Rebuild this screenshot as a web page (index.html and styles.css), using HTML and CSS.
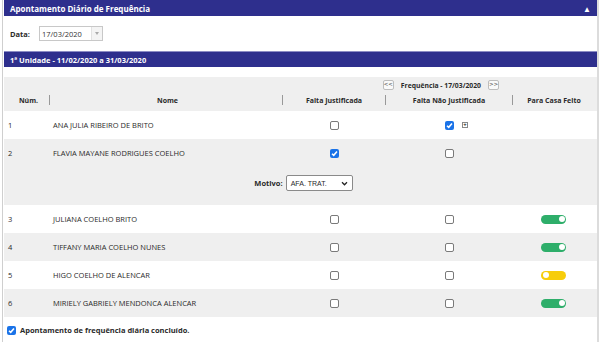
FILE: index.html
```html
<!DOCTYPE html>
<html lang="pt-BR">
<head>
    <meta charset="UTF-8">
    <title>Apontamento Diário de Frequência</title>
    <link rel="stylesheet" href="styles.css">
</head>
<body>

<div class="page">
    <div class="bar bar-top">
        <span>Apontamento Diário de Frequência</span>
        <span class="collapse">&#9650;</span>
    </div>

    <div class="date-row">
        <label class="date-label">Data:</label>
        <div class="date-input">
            <span class="date-value">17/03/2020</span>
            <span class="date-drop"><span class="tri"></span></span>
        </div>
    </div>

    <div class="bar bar-unit">1ª Unidade - 11/02/2020 a 31/03/2020</div>

    <div class="grid-head">
        <div class="nav-row">
            <span class="nav-btn">&lt;&lt;</span>
            <span class="nav-title">Frequência - 17/03/2020</span>
            <span class="nav-btn">&gt;&gt;</span>
        </div>
        <div class="row head-row">
            <div class="cell c-num sep">Núm.</div>
            <div class="cell c-name sep">Nome</div>
            <div class="cell c-mid sep">Falta Justificada</div>
            <div class="cell c-mid sep">Falta Não Justificada</div>
            <div class="cell c-mid">Para Casa Feito</div>
        </div>
    </div>

    <div class="row">
        <div class="cell c-num">1</div>
        <div class="cell c-name">ANA JULIA RIBEIRO DE BRITO</div>
        <div class="cell c-mid"><span class="chk"></span></div>
        <div class="cell c-mid c-plus">
            <span></span>
            <span class="chk on"><svg viewBox="0 0 8 8"><path d="M1.8 4.2 3.3 5.6 6.2 2.2" /></svg></span>
            <span class="plus">+</span>
        </div>
        <div class="cell c-mid"></div>
    </div>

    <div class="row-group alt">
        <div class="row">
            <div class="cell c-num">2</div>
            <div class="cell c-name">FLAVIA MAYANE RODRIGUES COELHO</div>
            <div class="cell c-mid"><span class="chk on"><svg viewBox="0 0 8 8"><path d="M1.8 4.2 3.3 5.6 6.2 2.2" /></svg></span></div>
            <div class="cell c-mid"><span class="chk"></span></div>
            <div class="cell c-mid"></div>
        </div>
        <div class="motivo">
            <label class="motivo-label">Motivo:</label>
            <div class="select">
                <span>AFA. TRAT.</span>
                <svg class="caret" viewBox="0 0 8 6"><path d="M1 1.5 4 4.5 7 1.5" /></svg>
            </div>
        </div>
    </div>

    <div class="row">
        <div class="cell c-num">3</div>
        <div class="cell c-name">JULIANA COELHO BRITO</div>
        <div class="cell c-mid"><span class="chk"></span></div>
        <div class="cell c-mid"><span class="chk"></span></div>
        <div class="cell c-mid"><span class="toggle on"></span></div>
    </div>

    <div class="row alt">
        <div class="cell c-num">4</div>
        <div class="cell c-name">TIFFANY MARIA COELHO NUNES</div>
        <div class="cell c-mid"><span class="chk"></span></div>
        <div class="cell c-mid"><span class="chk"></span></div>
        <div class="cell c-mid"><span class="toggle on"></span></div>
    </div>

    <div class="row">
        <div class="cell c-num">5</div>
        <div class="cell c-name">HIGO COELHO DE ALENCAR</div>
        <div class="cell c-mid"><span class="chk"></span></div>
        <div class="cell c-mid"><span class="chk"></span></div>
        <div class="cell c-mid"><span class="toggle off"></span></div>
    </div>

    <div class="row alt">
        <div class="cell c-num">6</div>
        <div class="cell c-name">MIRIELY GABRIELY MENDONCA ALENCAR</div>
        <div class="cell c-mid"><span class="chk"></span></div>
        <div class="cell c-mid"><span class="chk"></span></div>
        <div class="cell c-mid"><span class="toggle on"></span></div>
    </div>

    <div class="done">
        <span class="chk on"><svg viewBox="0 0 8 8"><path d="M1.8 4.2 3.3 5.6 6.2 2.2" /></svg></span>
        <span>Apontamento de frequência diária concluído.</span>
    </div>
</div>

</body>
</html>
```

FILE: styles.css
```css
* {
    box-sizing: border-box;
}

body {
    margin: 0;
    background: #fff;
    font-family: "Open Sans", Arial, sans-serif;
    font-size: 7.5px;
    color: #2a2a2a;
}

.page {
    margin-left: 2px;
    width: 597px;
    height: 342px;
    border-left: 1px solid #cfcfcf;
    border-right: 2px solid #dcdcdc;
    padding-left: 1px;
}

.bar {
    display: flex;
    align-items: center;
    justify-content: space-between;
    background: #2e2f8d;
    color: #fff;
    font-weight: bold;
    padding: 0 6px;
}

.bar-top {
    height: 16px;
    font-size: 8px;
}

.collapse {
    font-size: 8px;
}

.date-row {
    display: flex;
    align-items: center;
    gap: 9px;
    height: 35px;
    padding-left: 6px;
}

.date-label {
    font-weight: bold;
}

.date-input {
    display: flex;
    width: 64px;
    height: 15px;
    border: 1px solid #c8c8c8;
    align-items: center;
}

.date-value {
    flex: 1;
    padding-left: 2px;
    color: #333;
}

.date-drop {
    width: 11px;
    height: 100%;
    border-left: 1px solid #e2e2e2;
    background: #f4f4f4;
    display: flex;
    align-items: center;
    justify-content: center;
}

.tri {
    border-left: 2.5px solid transparent;
    border-right: 2.5px solid transparent;
    border-top: 3px solid #aaa;
}

.bar-unit {
    height: 16px;
    border-top: 1px solid #8c8cc4;
}

.grid-head {
    margin-top: 10px;
    background: #efefef;
    height: 34px;
    padding-top: 3px;
}

.nav-row {
    display: flex;
    align-items: center;
    justify-content: flex-end;
    gap: 7px;
    height: 10px;
    padding-right: 98px;
    font-weight: bold;
}

.nav-btn {
    display: inline-flex;
    align-items: center;
    justify-content: center;
    width: 11px;
    height: 10px;
    border: 1px solid #bdbdbd;
    border-radius: 2px;
    background: #fafafa;
    font-family: "DejaVu Sans", sans-serif;
    font-size: 5.5px;
    font-weight: normal;
    color: #555;
    line-height: 1;
}

.nav-title {
    font-size: 6.8px;
}

.row {
    display: grid;
    grid-template-columns: 46px 233px 103px 127px 82px;
    align-items: center;
    height: 28px;
}

.head-row {
    height: 20px;
    font-weight: bold;
    font-size: 7px;
}

.cell {
    display: flex;
    align-items: center;
    height: 100%;
}

.head-row .cell {
    height: 10px;
    justify-content: center;
}

.head-row .sep {
    border-right: 1px solid #999;
}

.c-num {
    padding-left: 4px;
}

.c-name {
    padding-left: 3px;
}

.c-mid {
    justify-content: center;
}

.c-plus {
    display: grid;
    grid-template-columns: 1fr auto 1fr;
    align-items: center;
    justify-items: center;
}

.plus {
    justify-self: start;
    margin-left: 8px;
    width: 6px;
    height: 6px;
    border: 1px solid #888;
    font-size: 6px;
    line-height: 4px;
    text-align: center;
    font-weight: bold;
    color: #222;
}

.alt {
    background: #efefef;
}

.chk {
    display: inline-block;
    width: 9px;
    height: 9px;
    border: 1px solid #7a7a7a;
    border-radius: 2px;
    background: #fff;
}

.chk.on {
    border: none;
    background: #1a73e8;
}

.chk svg {
    display: block;
    width: 9px;
    height: 9px;
    fill: none;
    stroke: #fff;
    stroke-width: 1.4;
}

.motivo {
    display: flex;
    align-items: center;
    justify-content: center;
    gap: 3px;
    height: 38px;
    padding-bottom: 6px;
    padding-left: 6px;
}

.motivo-label {
    font-weight: bold;
}

.select {
    display: flex;
    align-items: center;
    justify-content: space-between;
    width: 67px;
    height: 16px;
    border: 1px solid #8a8a8a;
    border-radius: 2px;
    background: #fff;
    padding: 0 4px;
    font-family: "Liberation Sans", Arial, sans-serif;
    font-size: 7px;
}

.caret {
    width: 7px;
    height: 5px;
    fill: none;
    stroke: #222;
    stroke-width: 1.5;
}

.toggle {
    position: relative;
    display: inline-block;
    width: 25px;
    height: 9px;
    border-radius: 5px;
    margin-left: -1px;
}

.toggle::after {
    content: "";
    position: absolute;
    top: 1.5px;
    width: 6px;
    height: 6px;
    border-radius: 50%;
    background: #fff;
}

.toggle.on {
    background: #2eae6a;
}

.toggle.on::after {
    right: 1.5px;
}

.toggle.off {
    background: #f7cd0a;
}

.toggle.off::after {
    left: 1.5px;
}

.done {
    display: flex;
    align-items: center;
    gap: 4px;
    height: 26px;
    padding-left: 3px;
    font-weight: bold;
}
```
